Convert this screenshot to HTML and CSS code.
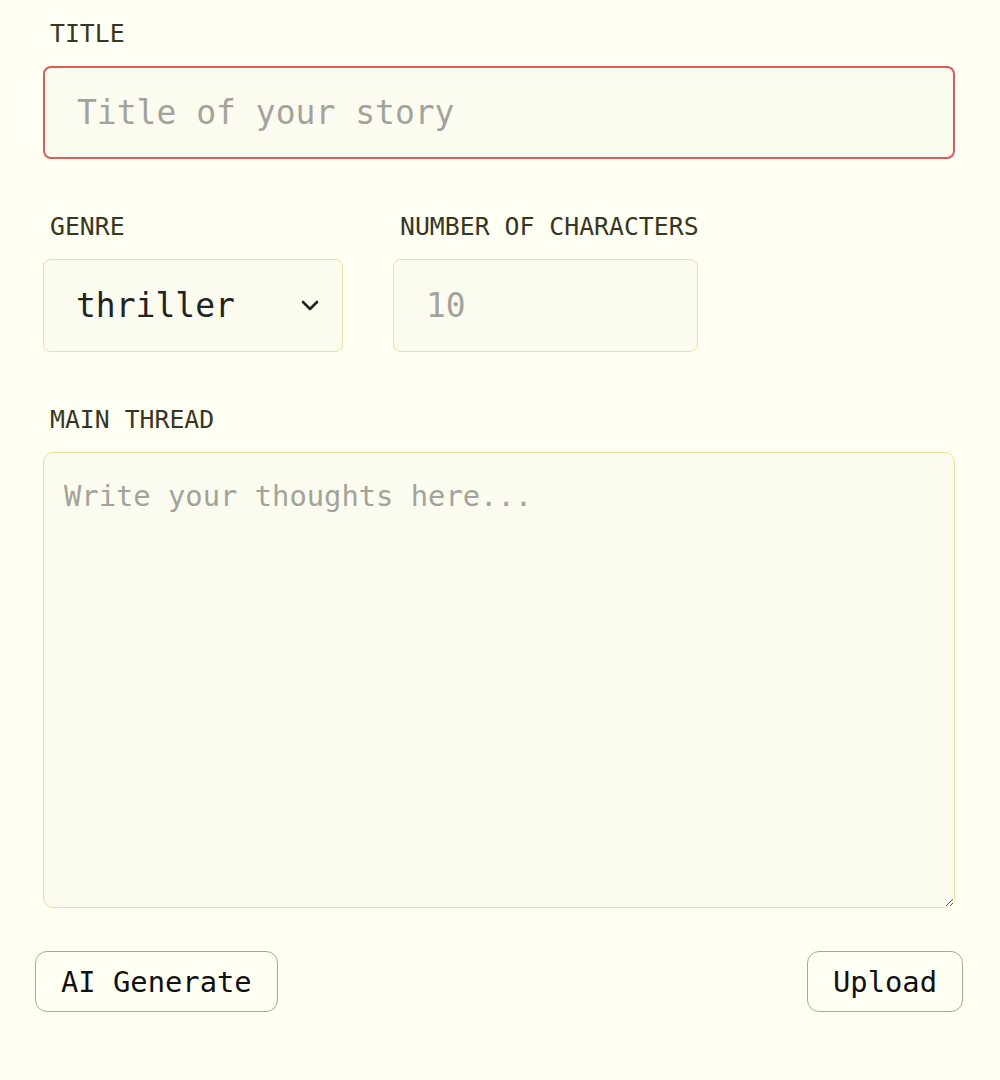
FILE: index.html
```html
<!DOCTYPE html>
<html lang="en">
<head>
<meta charset="utf-8">
<title>Story form</title>
<link rel="stylesheet" href="styles.css">
</head>
<body>
<form class="story-form">
  <div class="field">
    <label class="label" for="title">TITLE</label>
    <input class="control control-title" id="title" type="text" placeholder="Title of your story">
  </div>
  <div class="row">
    <div class="field">
      <label class="label" for="genre">GENRE</label>
      <select class="control control-select" id="genre">
        <option>thriller</option>
      </select>
    </div>
    <div class="field">
      <label class="label" for="count">NUMBER OF CHARACTERS</label>
      <input class="control control-number" id="count" type="text" placeholder="10">
    </div>
  </div>
  <div class="field">
    <label class="label" for="thread">MAIN THREAD</label>
    <textarea class="control control-area" id="thread" placeholder="Write your thoughts here..."></textarea>
  </div>
  <div class="actions">
    <button type="button" class="btn">AI Generate</button>
    <button type="button" class="btn">Upload</button>
  </div>
</form>
</body>
</html>
```
FILE: styles.css
```css
html, body {
  margin: 0;
  padding: 0;
  background: #fffff4;
}
body {
  font-family: "DejaVu Sans Mono", monospace;
  color: #222;
}
.story-form {
  padding: 19px 37px 0 35px;
  display: flex;
  flex-direction: column;
  gap: 53px;
}
.field {
  display: flex;
  flex-direction: column;
  gap: 17px;
  margin: 0 8px;
}
.row .field {
  margin: 0;
}
.row {
  display: grid;
  grid-template-columns: 300px 305px;
  column-gap: 50px;
  margin: 0 8px;
}
.label {
  font-size: 24.8px;
  line-height: 30px;
  color: #38361f;
  padding-left: 7px;
  white-space: nowrap;
}
.control {
  box-sizing: border-box;
  font-family: "DejaVu Sans Mono", monospace;
  background: #fcfbef;
  border: 1.5px solid #e6e2a4;
  border-radius: 8px;
  outline: none;
  margin: 0;
  color: #222;
}
.control::placeholder {
  color: #a3a39b;
}
.control-title {
  width: 100%;
  height: 93px;
  font-size: 33px;
  padding: 0 32px;
  border: 2px solid #e05a58;
}
.control-select {
  width: 300px;
  height: 93px;
  font-size: 33px;
  padding: 0 32px;
  appearance: none;
  -webkit-appearance: none;
  background-image: url("data:image/svg+xml,%3Csvg xmlns='http://www.w3.org/2000/svg' width='18' height='11' viewBox='0 0 18 11'%3E%3Cpath d='M2 2l7 7 7-7' fill='none' stroke='%23222' stroke-width='2.6' stroke-linecap='round' stroke-linejoin='round'/%3E%3C/svg%3E");
  background-repeat: no-repeat;
  background-position: right 23px center;
  background-size: 18px 11px;
}
.control-number {
  width: 305px;
  height: 93px;
  font-size: 33px;
  padding: 0 32px;
}
.control-area {
  width: 100%;
  height: 456px;
  font-size: 28.8px;
  padding: 26px 20px;
  border-radius: 10px;
  resize: vertical;
  line-height: 1.2;
}
.actions {
  display: flex;
  justify-content: space-between;
  margin-top: -10px;
}
.btn {
  font-family: "DejaVu Sans Mono", monospace;
  font-size: 28.8px;
  height: 61px;
  padding: 0 25px;
  background: transparent;
  border: 1.5px solid #aaa88f;
  border-radius: 12px;
  color: #111;
  cursor: pointer;
}
```
